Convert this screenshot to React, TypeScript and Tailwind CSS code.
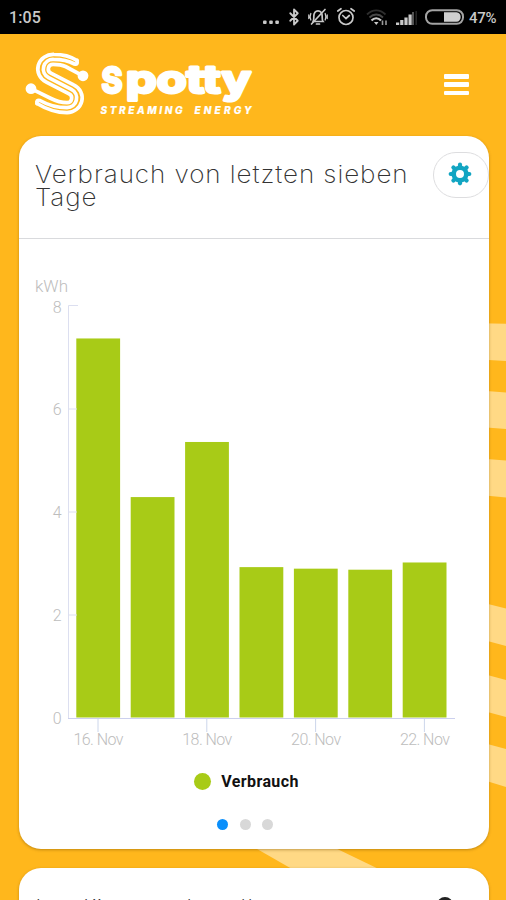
import { Bluetooth } from 'lucide-react';

const days = [
  { label: '16. Nov', value: 7.36 },
  { label: '17. Nov', value: 4.28 },
  { label: '18. Nov', value: 5.35 },
  { label: '19. Nov', value: 2.92 },
  { label: '20. Nov', value: 2.89 },
  { label: '21. Nov', value: 2.87 },
  { label: '22. Nov', value: 3.01 },
];

const ticks = [8, 6, 4, 2, 0];

const unit = 51.5;
const step = 54.4;

const gearTeeth = [0, 45, 90, 135, 180, 225, 270, 315];

function StatusBar() {
  return (
    <div className="flex h-[34px] items-center bg-black pr-2 pl-[9px] font-['Roboto'] text-[#c9c9c9]">
      <span className="mt-[2px] text-[16px] font-medium tracking-[0.1px]">1:05</span>
      <svg className="ml-auto h-[34px] w-[18px]" viewBox="0 0 18 34" fill="currentColor">
        <rect x="0" y="20.500" width="3.600" height="3.600" rx="1" />
        <rect x="6.200" y="20.500" width="3.600" height="3.600" rx="1" />
        <rect x="12.300" y="20.500" width="3.600" height="3.600" rx="1" />
      </svg>
      <Bluetooth className="ml-[4px] h-[18px] w-[18px]" strokeWidth={2.4} />
      <svg
        className="ml-[5px] h-5 w-5"
        viewBox="0 0 20 20"
        fill="none"
        stroke="currentColor"
        strokeWidth="1.700"
        strokeLinecap="round"
      >
        <path d="M5 14.500h10c-1-1.300-.8-3-.8-5C14.200 6 12.500 3.800 10 3.800S5.800 6 5.800 9.500c0 2 .2 3.700-.8 5" />
        <path d="M8.500 17h3M17 2.500L3.500 17" />
        <path d="M2.800 6.500c-.8 2-.8 4.500 0 6.500M.8 8v3.500M17.200 6.500c.8 2 .8 4.500 0 6.500M19.200 8v3.500" strokeWidth="1.300" />
      </svg>
      <svg
        className="ml-[8px] h-5 w-5"
        viewBox="0 0 20 20"
        fill="none"
        stroke="currentColor"
        strokeWidth="1.700"
        strokeLinecap="round"
      >
        <circle cx="10" cy="10.500" r="7" />
        <path d="M6.800 8.500l3.200 3 3.300-3M1.800 4L5 1.700M18.200 4L15 1.700" />
      </svg>
      <svg className="ml-[10px] h-[18px] w-[22px]" viewBox="0 0 22 18" fill="none" strokeWidth="1.800">
        <path d="M1 6.500c5.500-5.500 13-5.500 18.500 0" stroke="#2e2e2e" />
        <path d="M3.500 9.500c4-4 9.500-4 13.500 0" stroke="#484848" />
        <path d="M5.500 12.500c2.700-3 6.700-3 9.500 0" stroke="currentColor" strokeWidth="2.200" />
        <path d="M8 14h4.500L10.300 17z" fill="currentColor" />
        <path d="M16.500 12.500v4.500M20 12.500v4.500" stroke="#999" strokeWidth="1.600" />
      </svg>
      <svg className="ml-[8px] h-[18px] w-[22px]" viewBox="0 0 22 18" fill="currentColor">
        <rect x="0" y="14.500" width="3.200" height="2.500" />
        <rect x="4.200" y="12" width="3.200" height="5" />
        <rect x="8.400" y="9.500" width="3.200" height="7.500" />
        <rect x="12.500" y="6.500" width="3.200" height="10.500" />
        <rect x="16.300" y="4" width="1.400" height="13" fill="#777" />
        <rect x="19.500" y="3" width="1.400" height="14" fill="#2a2a2a" />
      </svg>
      <svg className="ml-[7px] h-4 w-[39px]" viewBox="0 0 39 16" fill="none">
        <rect x="1" y="1.200" width="37" height="13.600" rx="6.200" stroke="#a3a3a3" strokeWidth="2" />
        <path d="M19 3.200h12.500c5.500 0 5.500 9.600 0 9.600H19z" fill="#cfcfcf" />
      </svg>
      <span className="mt-[2px] ml-[5px] w-[29px] text-[15px] font-medium tracking-[-0.300px]">47%</span>
    </div>
  );
}

function Logo() {
  return (
    <svg className="h-[72px] w-[234px]" viewBox="24 47 234 72" fill="none">
      <g stroke="white" strokeWidth="3.700" strokeLinecap="round" strokeLinejoin="round">
        <path d="M77 60.500C70 56 64 54.300 54 54.300A15.500 14.700 0 0 0 46.300 82.100L69.100 93.800A4.700 4.700 0 0 1 67 102.700C60 102.700 54 100 50 98L31 88.700" />
        <path d="M77 60.500Q78 65 74.500 64C68 60.500 62 59.300 53.500 59.300A9.700 9.700 0 0 0 48.600 77.600L71.400 89.400A9.700 9.700 0 0 1 67 107.700C57 107.700 47 104.500 40 100.500Q36 99.500 37 103.500" />
        <path d="M83 75.800L65.500 66.500C61.500 64.600 58 64.300 53 64.300A4.700 4.700 0 0 0 50.900 73.200L73.700 84.900A15.500 14.700 0 0 1 67 112.700C55 112.700 46 109 37 103.500" />
      </g>
      <circle cx="83" cy="75.800" r="5.400" fill="white" />
      <circle cx="31" cy="88.700" r="5.400" fill="white" />
      <text
        y="93"
        className="font-['Inter'] font-bold"
        fill="white"
        stroke="white"
        strokeWidth="3"
        strokeLinejoin="round"
      >
        <tspan x="101.500" fontSize="36" textLength="21" lengthAdjust="spacingAndGlyphs">S</tspan>
        <tspan x="126" fontSize="39" textLength="125" lengthAdjust="spacingAndGlyphs">potty</tspan>
      </text>
      <g className="font-['Inter'] text-[10px] font-extrabold italic" fill="white" stroke="white" strokeWidth="0.200">
        <text x="100.500" y="114.300" textLength="82">STREAMING</text>
        <text x="194.500" y="114.300" textLength="57">ENERGY</text>
      </g>
    </svg>
  );
}

// Pale bands that run behind the cards
function Stripes() {
  return (
    <svg className="absolute inset-0 h-[900px] w-[506px]" viewBox="0 0 506 900" fill="#ffd985">
      <path d="M480 323.300L506 323.800V361L480 359.500z" />
      <path d="M480 390.500L506 392.500V429L480 427z" />
      <path d="M480 458.500L506 460.500V497.500L480 495z" />
      <path d="M480 602L506 608.500V646L480 639z" />
      <path d="M480 673L506 680V717L480 710z" />
      <path d="M480 742L506 749V787L480 779z" />
      <path d="M250 845L329 845L387 873L299 873z" />
    </svg>
  );
}

function GearIcon() {
  return (
    <svg className="size-6" viewBox="0 0 24 24" fill="none" stroke="#12a5c2">
      <circle cx="12" cy="12" r="6.300" strokeWidth="4.600" />
      {gearTeeth.map((angle) => (
        <path
          key={angle}
          d="M12 4.500V2.700"
          strokeWidth="4.200"
          strokeLinecap="round"
          transform={`rotate(${angle} 12 12)`}
        />
      ))}
    </svg>
  );
}

function Chart() {
  return (
    <svg className="block h-[512px] w-[470px]" viewBox="19 239 470 512">
      <g className="font-['Roboto'] text-[16px] font-light" fill="#bdbdbd">
        <text x="35" y="291.500" textLength="33" lengthAdjust="spacingAndGlyphs">kWh</text>
        {ticks.map((tick) => (
          <text key={tick} x="61.500" y={724 - tick * unit + (tick === 8 ? 1 : 0)} textAnchor="end">
            {tick}
          </text>
        ))}
        {days.map((day, i) =>
          i % 2 === 0 ? (
            <text key={day.label} x={98.500 + i * step} y="744.500" textAnchor="middle" textLength="50">
              {day.label}
            </text>
          ) : null,
        )}
      </g>
      <path d="M78 305.500H68.500V718" fill="none" stroke="#dcdff0" />
      {days.map((day, i) => (
        <rect
          key={day.label}
          x={76.300 + i * step}
          y={717.500 - day.value * unit}
          width="43.800"
          height={day.value * unit}
          fill="#a8cb17"
        />
      ))}
      <path d="M68 718.500H455" stroke="#ccd0ee" />
      {days.map((day, i) =>
        i % 2 === 0 ? (
          <path key={day.label} d="M0 719V732" transform={`translate(${98 + i * step} 0)`} stroke="#ccd6eb" />
        ) : null,
      )}
      {[2, 4, 6].map((tick) => (
        <path key={tick} d="M68 0H77" transform={`translate(0 ${718 - tick * unit})`} stroke="#dcdff0" />
      ))}
    </svg>
  );
}

export default function App() {
  return (
    <div className="relative h-[900px] w-[506px] overflow-hidden bg-[#ffb71c]">
      <Stripes />
      <div className="relative">
        <StatusBar />
        <header className="flex h-[102px] items-start justify-between pt-[13px] pr-[37px] pl-6">
          <Logo />
          <button className="mt-[27px] flex w-[25px] flex-col gap-[3.500px]" aria-label="Menu">
            <span className="h-[4.800px] w-full rounded-[1px] bg-white" />
            <span className="h-[4.800px] w-full rounded-[1px] bg-white" />
            <span className="h-[4.800px] w-full rounded-[1px] bg-white" />
          </button>
        </header>

        <section className="ml-[19px] h-[713px] w-[470px] overflow-hidden rounded-[22px] bg-white shadow-[0_1px_3px_rgba(120,80,0,0.45)]">
          <div className="flex h-[103px] justify-between border-b border-[#d9dadd] pt-4 pl-[16px]">
            <h2 className="mt-[11px] w-[360px] origin-left scale-x-[1.085] font-['Inter'] text-[24px] leading-[23px] font-extralight tracking-[0.850px] text-[#333]">
              Verbrauch von letzten sieben Tage
            </h2>
            <button
              className="flex h-[46px] w-[56px] items-center justify-center rounded-[23px] border border-[#dddddf] pr-[2px] pb-[2px]"
              aria-label="Einstellungen"
            >
              <GearIcon />
            </button>
          </div>
          <Chart />
          <div className="mt-[18px] flex items-center justify-center gap-[10px] pr-[15px]">
            <span className="size-[17px] rounded-full bg-[#a8cb17]" />
            <span className="mt-[2px] font-['Roboto'] text-[16px] leading-[22px] font-bold tracking-[0.400px] text-[#111]">
              Verbrauch
            </span>
          </div>
          <div className="mt-[26px] flex justify-center gap-[11.500px] pr-[18px]">
            <span className="size-[11px] rounded-full bg-[#0a8ffb]" />
            <span className="size-[11px] rounded-full bg-[#d8d8d8]" />
            <span className="size-[11px] rounded-full bg-[#d8d8d8]" />
          </div>
        </section>

        <section className="mt-[19px] ml-[19px] flex h-[200px] w-[470px] justify-between rounded-[22px] bg-white pt-[29px] pl-[16px] shadow-[0_1px_3px_rgba(120,80,0,0.45)]">
          <h2 className="origin-left scale-x-[1.085] font-['Inter'] text-[24px] leading-[23px] font-extralight tracking-[0.850px] text-[#333]">
            Im Jänner aktuell
          </h2>
          <span className="mr-[36px] size-4 rounded-full border-3 border-[#222]" />
        </section>
      </div>
    </div>
  );
}
